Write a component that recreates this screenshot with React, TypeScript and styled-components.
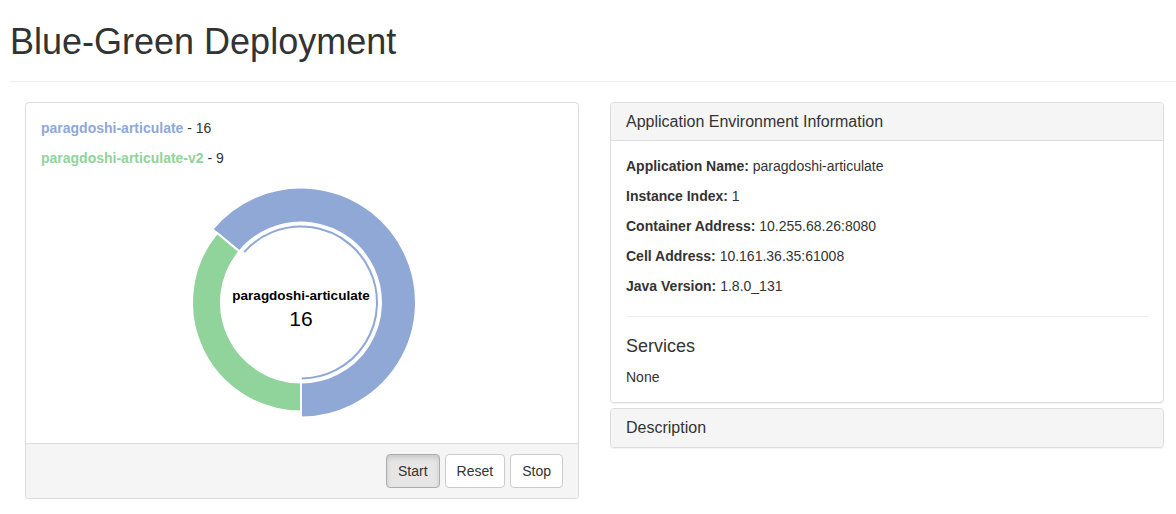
import React from "react";
import styled, { createGlobalStyle } from "styled-components";

const BLUE = "#8fa8d6";
const GREEN = "#90d39b";

const GlobalStyle = createGlobalStyle`
  html, body { margin: 0; padding: 0; background: #fff; }
  body {
    font-family: "Liberation Sans", Arial, Helvetica, sans-serif;
    font-size: 14px;
    line-height: 1.42857143;
    color: #333;
  }
  * { box-sizing: border-box; }
`;

const PageHeader = styled.div`
  margin: 0 0 20px 10px;
  padding-bottom: 9px;
  border-bottom: 1px solid #eee;
`;

const Title = styled.h1`
  margin: 22px 0 10px;
  font-size: 36px;
  font-weight: 500;
  line-height: 1.1;
  color: #333;
`;

const Columns = styled.div`
  display: grid;
  grid-template-columns: 554px 554px;
  column-gap: 31px;
  padding-left: 25px;
  align-items: start;
`;

const Stack = styled.div`
  display: flex;
  flex-direction: column;
  gap: 5px;
`;

const Panel = styled.div`
  background: #fff;
  border: 1px solid #ddd;
  border-radius: 4px;
  box-shadow: 0 1px 1px rgba(0, 0, 0, 0.05);
  overflow: hidden;
`;

const PanelHeading = styled.div`
  background: #f5f5f5;
  padding: 10px 15px;
  border-bottom: ${(p: { $last?: boolean }) => (p.$last ? "none" : "1px solid #ddd")};
`;

const PanelTitle = styled.h3`
  margin: 0;
  font-size: 16px;
  font-weight: 500;
  line-height: 1.1;
  color: #333;
`;

const PanelBody = styled.div`
  padding: 15px;
`;

const PanelFooter = styled.div`
  display: flex;
  justify-content: flex-end;
  gap: 5px;
  padding: 10px 15px;
  background: #f5f5f5;
  border-top: 1px solid #ddd;
`;

const Para = styled.p`
  margin: 0 0 10px;
`;

const LegendName = styled.b<{ $color: string }>`
  color: ${(p) => p.$color};
  font-weight: 700;
`;

const Label = styled.b`
  font-weight: 700;
`;

const Rule = styled.hr`
  margin: 20px 0;
  border: 0;
  border-top: 1px solid #eee;
`;

const SubTitle = styled.h4`
  margin: 0 0 10px;
  font-size: 18px;
  font-weight: 500;
  line-height: 1.1;
  color: #333;
`;

const Button = styled.button<{ $active?: boolean }>`
  font-family: inherit;
  font-size: 14px;
  line-height: 1.42857143;
  padding: 6px 11px;
  color: #333;
  border: 1px solid ${(p) => (p.$active ? "#adadad" : "#ccc")};
  background: ${(p) => (p.$active ? "#e6e6e6" : "#fff")};
  box-shadow: ${(p) => (p.$active ? "inset 0 3px 5px rgba(0,0,0,.125)" : "none")};
  border-radius: 4px;
  cursor: pointer;
`;

const ChartSvg = styled.svg`
  display: block;
  width: 522px;
  height: 250px;
`;

const CX = 260;
const CY = 124.5;

function pt(r: number, deg: number) {
  const a = (deg * Math.PI) / 180;
  return [CX + r * Math.sin(a), CY - r * Math.cos(a)];
}

function arcPath(r0: number, r1: number, a0: number, a1: number) {
  const large = a1 - a0 > 180 ? 1 : 0;
  const [x0, y0] = pt(r1, a0);
  const [x1, y1] = pt(r1, a1);
  const [x2, y2] = pt(r0, a1);
  const [x3, y3] = pt(r0, a0);
  return `M${x0} ${y0} A${r1} ${r1} 0 ${large} 1 ${x1} ${y1} L${x2} ${y2} A${r0} ${r0} 0 ${large} 0 ${x3} ${y3} Z`;
}

function linePath(r: number, a0: number, a1: number) {
  const large = a1 - a0 > 180 ? 1 : 0;
  const [x0, y0] = pt(r, a0);
  const [x1, y1] = pt(r, a1);
  return `M${x0} ${y0} A${r} ${r} 0 ${large} 1 ${x1} ${y1}`;
}

const Donut = () => {
  const blueStart = -50.4;
  return (
    <ChartSvg viewBox="0 0 522 250">
      <path d={arcPath(80, 115, blueStart, 180)} fill={BLUE} stroke="#fff" strokeWidth={2} />
      <path d={arcPath(80, 109, 180, 309.6)} fill={GREEN} stroke="#fff" strokeWidth={2} />
      <path d={linePath(76, blueStart + 2, 179.5)} fill="none" stroke={BLUE} strokeWidth={2} />
      <text
        x={CX}
        y={121.5}
        textAnchor="middle"
        fontFamily="'Liberation Sans', Arial, sans-serif"
        fontWeight={700}
        fontSize={13.5}
        fill="#000"
      >
        paragdoshi-articulate
      </text>
      <text
        x={CX}
        y={147.7}
        textAnchor="middle"
        fontFamily="'Liberation Sans', Arial, sans-serif"
        fontSize={21}
        fill="#000"
      >
        16
      </text>
    </ChartSvg>
  );
};

const info: [string, string][] = [
  ["Application Name:", "paragdoshi-articulate"],
  ["Instance Index:", "1"],
  ["Container Address:", "10.255.68.26:8080"],
  ["Cell Address:", "10.161.36.35:61008"],
  ["Java Version:", "1.8.0_131"],
];

export default function App() {
  return (
    <>
      <GlobalStyle />
      <PageHeader>
        <Title>Blue-Green Deployment</Title>
      </PageHeader>
      <Columns>
        <Panel>
          <PanelBody>
            <Para>
              <LegendName $color={BLUE}>paragdoshi-articulate</LegendName> - 16
            </Para>
            <Para>
              <LegendName $color={GREEN}>paragdoshi-articulate-v2</LegendName> - 9
            </Para>
            <Donut />
          </PanelBody>
          <PanelFooter>
            <Button $active>Start</Button>
            <Button>Reset</Button>
            <Button>Stop</Button>
          </PanelFooter>
        </Panel>
        <Stack>
          <Panel>
            <PanelHeading>
              <PanelTitle>Application Environment Information</PanelTitle>
            </PanelHeading>
            <PanelBody>
              {info.map(([k, v]) => (
                <Para key={k}>
                  <Label>{k}</Label> {v}
                </Para>
              ))}
              <Rule />
              <SubTitle>Services</SubTitle>
              <div>None</div>
            </PanelBody>
          </Panel>
          <Panel>
            <PanelHeading $last>
              <PanelTitle>Description</PanelTitle>
            </PanelHeading>
          </Panel>
        </Stack>
      </Columns>
    </>
  );
}
